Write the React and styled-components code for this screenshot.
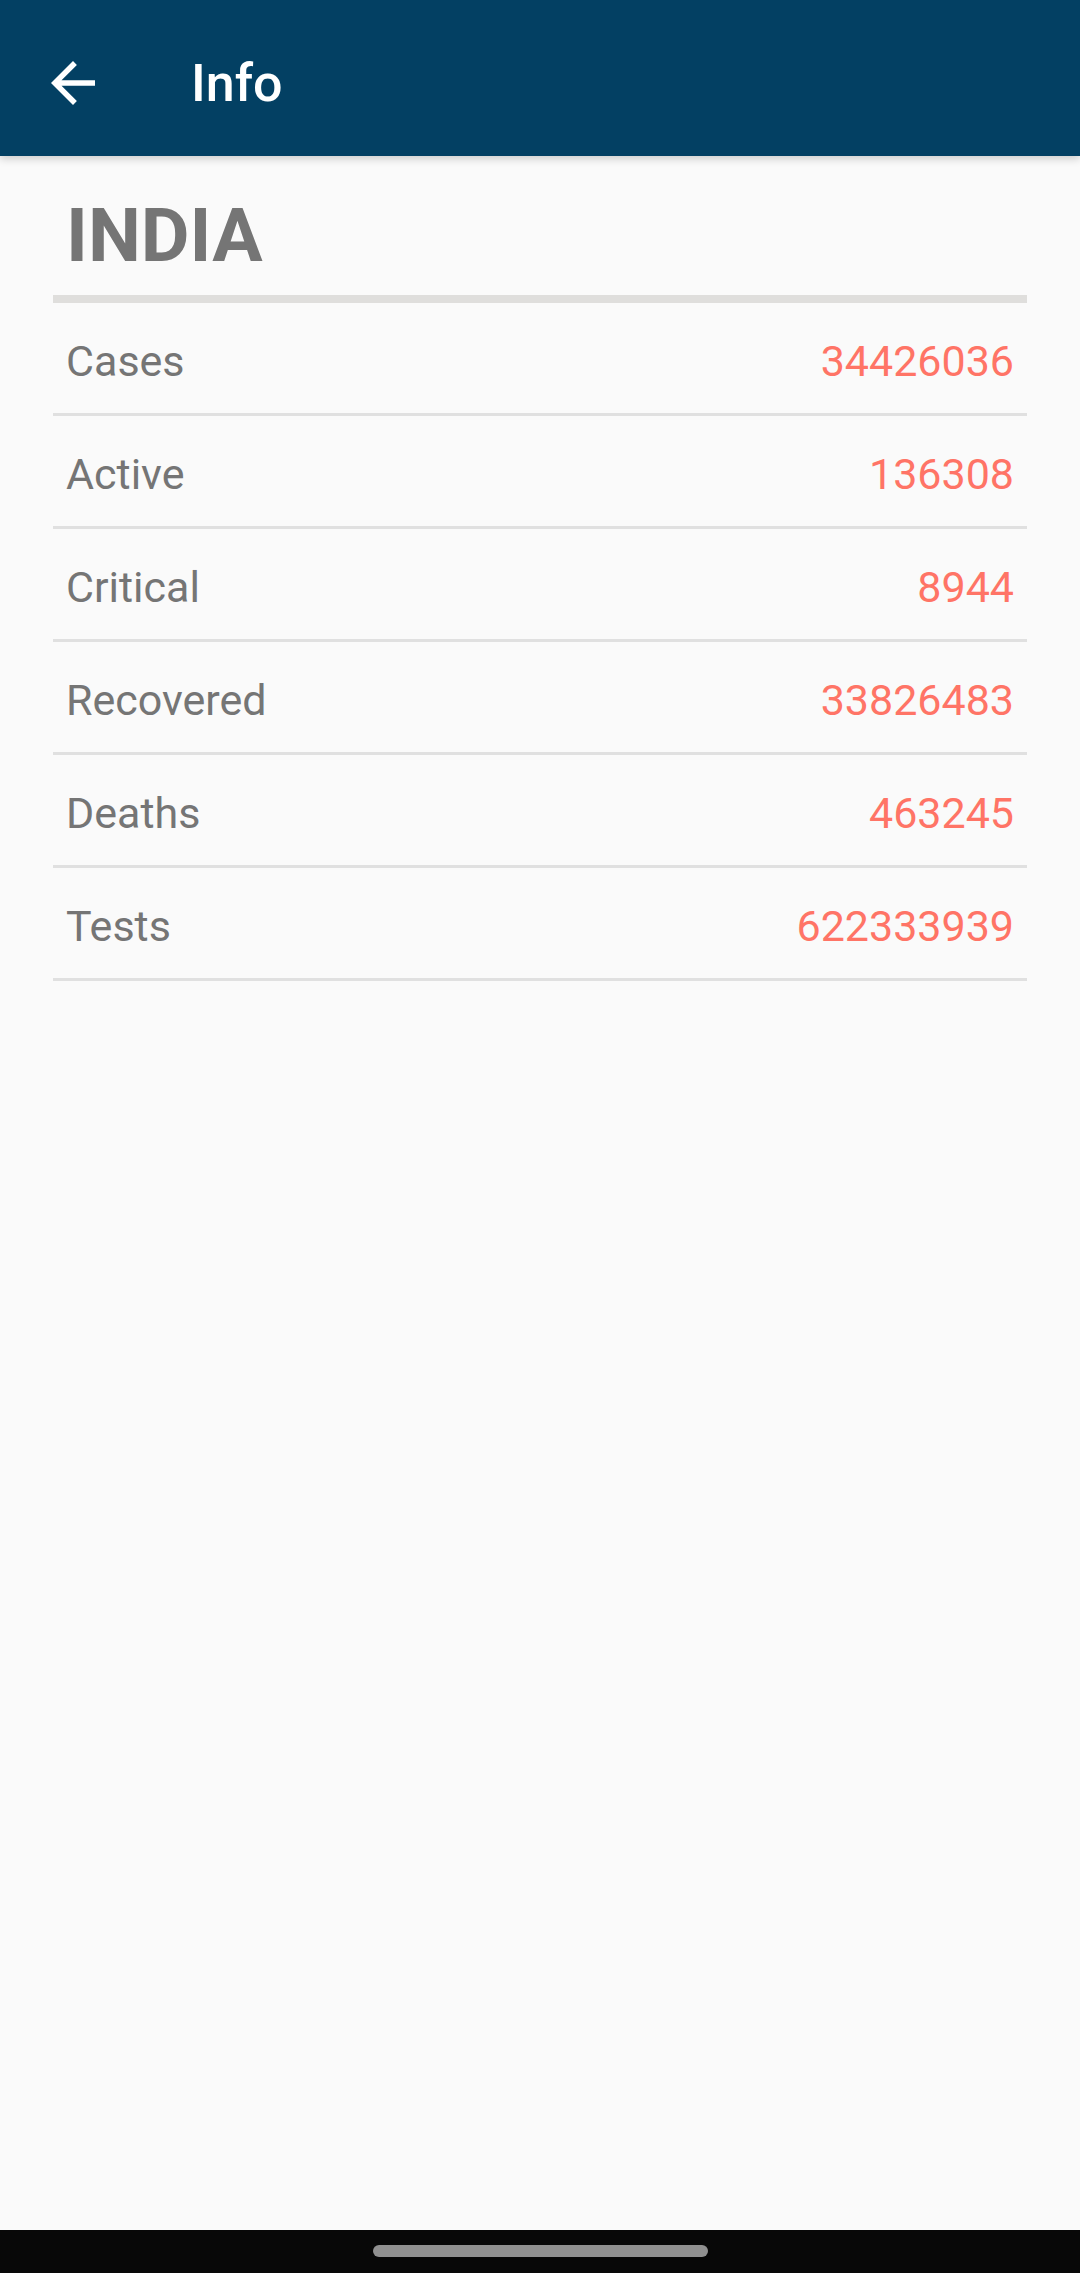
import React from "react";
import styled, { createGlobalStyle } from "styled-components";

const GlobalStyle = createGlobalStyle`
    html, body {
        margin: 0;
        padding: 0;
        background-color: #fafafa;
        font-family: Roboto, "Noto Sans", "Liberation Sans", sans-serif;
    }
`;

const stats = [
    { label: "Cases", value: "34426036" },
    { label: "Active", value: "136308" },
    { label: "Critical", value: "8944" },
    { label: "Recovered", value: "33826483" },
    { label: "Deaths", value: "463245" },
    { label: "Tests", value: "622333939" },
];

function BackArrow() {
    return (
        <svg width="66" height="66" viewBox="0 0 24 24" fill="none">
            <path d="M20 11H7.83l5.59-5.59L12 4l-8 8 8 8 1.41-1.41L7.83 13H20v-2z" fill="#ffffff" />
        </svg>
    );
}

function App() {
    return (
        <Page>
            <GlobalStyle />
            <Toolbar>
                <IconButton type="button" aria-label="back">
                    <BackArrow />
                </IconButton>
                <Title>Info</Title>
            </Toolbar>
            <Content>
                <Country>INDIA</Country>
                <HeadDivider />
                {stats.map((s) => (
                    <Row key={s.label}>
                        <Label>{s.label}</Label>
                        <Value>{s.value}</Value>
                    </Row>
                ))}
            </Content>
            <NavBar>
                <Handle />
            </NavBar>
        </Page>
    );
}

export default App;

const Page = styled.div`
    width: 1080px;
    height: 2273px;
    display: flex;
    flex-direction: column;
    background-color: #fafafa;
    overflow: hidden;
`;

const Toolbar = styled.header`
    height: 156px;
    flex-shrink: 0;
    box-sizing: border-box;
    display: flex;
    align-items: center;
    padding: 8px 0 0 40px;
    background-color: #034063;
    box-shadow: 0 3px 8px rgba(0, 0, 0, 0.18);
    position: relative;
    z-index: 1;
`;

const IconButton = styled.button`
    width: 66px;
    height: 66px;
    padding: 0;
    border: none;
    background: transparent;
    display: flex;
    align-items: center;
    justify-content: center;
    margin-top: 2px;
`;

const Title = styled.h1`
    margin: 0 0 0 85px;
    color: #ffffff;
    font-size: 52px;
    font-weight: 500;
    line-height: 64px;
    padding-top: 4px;
`;

const Content = styled.main`
    flex: 1;
    padding: 0 53px;
`;

const Country = styled.h2`
    margin: 35px 0 16px 0;
    padding-left: 13px;
    font-size: 75px;
    font-weight: 700;
    line-height: 88px;
    color: #757575;
`;

const HeadDivider = styled.div`
    height: 8px;
    background-color: #dfdedc;
`;

const Row = styled.div`
    height: 113px;
    box-sizing: border-box;
    display: flex;
    align-items: center;
    justify-content: space-between;
    padding: 5px 13px 0 13px;
    border-bottom: 3px solid #e0e0e0;
`;

const Label = styled.span`
    font-size: 43px;
    color: #757575;
`;

const Value = styled.span`
    font-size: 43px;
    color: #ff7466;
`;

const NavBar = styled.div`
    height: 43px;
    flex-shrink: 0;
    background-color: #080808;
    display: flex;
    justify-content: center;
    padding-top: 15px;
    box-sizing: border-box;
`;

const Handle = styled.div`
    width: 335px;
    height: 12px;
    border-radius: 6px;
    background-color: #909090;
`;
